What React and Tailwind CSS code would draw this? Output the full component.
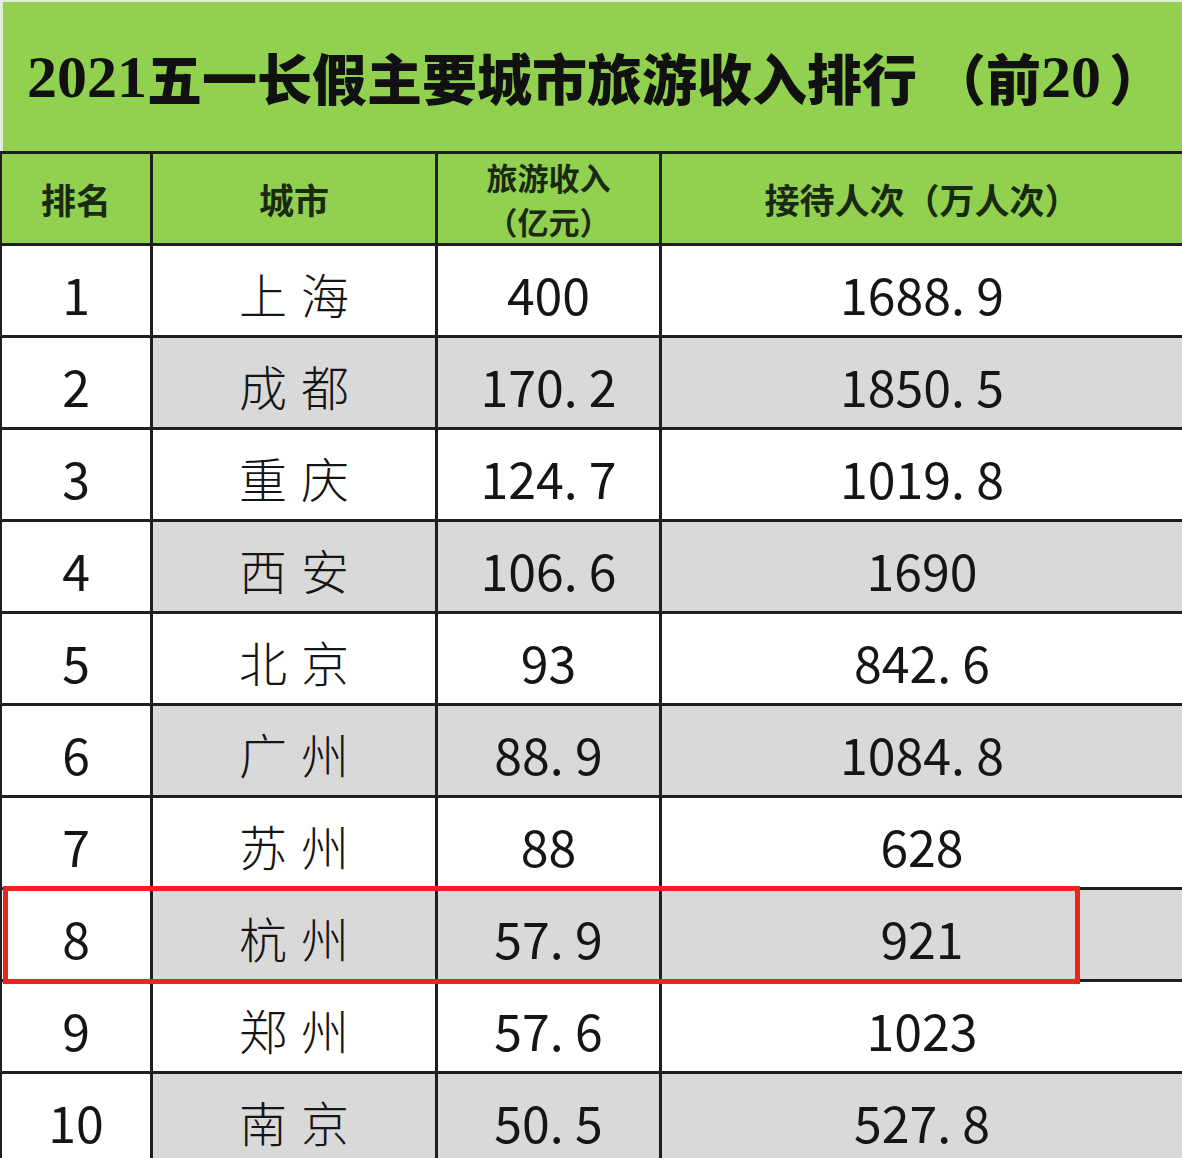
const rows = [
  [1, '上海', '400', '1688. 9'],
  [2, '成都', '170. 2', '1850. 5'],
  [3, '重庆', '124. 7', '1019. 8'],
  [4, '西安', '106. 6', '1690'],
  [5, '北京', '93', '842. 6'],
  [6, '广州', '88. 9', '1084. 8'],
  [7, '苏州', '88', '628'],
  [8, '杭州', '57. 9', '921'],
  [9, '郑州', '57. 6', '1023'],
  [10, '南京', '50. 5', '527. 8'],
]

const cjk = "font-['Noto_Sans_CJK_SC',sans-serif]"

function Row({ rank, city, income, visits }) {
  const shade = rank % 2 === 0 ? 'bg-[#d9d9d9]' : 'bg-white'
  return (
    <div className={`flex h-[92px] shrink-0 border-t-[3px] border-[#1f1f1f] text-[#151515] ${cjk}`}>
      <div className="flex w-[150px] items-center justify-center border-l-2 border-[#1f1f1f] bg-white pt-[6px] text-[50px]">
        {rank}
      </div>
      <div className={`flex w-[285px] items-center justify-center gap-[14px] border-l-[3px] border-[#1f1f1f] pt-[4px] text-[48px] font-light ${shade}`}>
        {city.split('').map((c, i) => (
          <span key={i}>{c}</span>
        ))}
      </div>
      <div className={`flex w-[224px] items-center justify-center whitespace-pre border-l-[3px] border-[#1f1f1f] pt-[6px] text-[50px] ${shade}`}>
        {income}
      </div>
      <div className={`flex flex-1 items-center justify-center whitespace-pre border-l-[3px] border-[#1f1f1f] pt-[6px] text-[50px] ${shade}`}>
        {visits}
      </div>
    </div>
  )
}

export default function App() {
  return (
    <div className="relative flex h-[1158px] w-[1182px] flex-col overflow-hidden bg-white">
      {/* title */}
      <div className={`flex h-[151px] shrink-0 items-center border-l-[3px] border-t-2 border-[#e4ecdc] bg-[#92d050] pl-[24px] text-[55px] font-black text-[#111] ${cjk}`}>
        <span className="font-['Liberation_Serif',serif] text-[60px] font-bold">2021</span>
        <span>五一长假主要城市旅游收入排行</span>
        <span className="ml-[14px]">（</span>
        <span>前</span>
        <span className="font-['Liberation_Serif',serif] text-[60px] font-bold">20</span>
        <span className="ml-[8px]">）</span>
      </div>

      {/* header */}
      <div className={`flex h-[92px] shrink-0 border-t-[3px] border-[#1f1f1f] bg-[#92d050] text-[35px] font-bold leading-[40px] text-[#1a2a12] ${cjk}`}>
        <div className="flex w-[150px] items-center justify-center border-l-2 border-[#1f1f1f]">排名</div>
        <div className="flex w-[285px] items-center justify-center border-l-[3px] border-[#1f1f1f]">城市</div>
        <div className="flex w-[224px] flex-col items-center justify-center border-l-[3px] border-[#1f1f1f] text-[31px] leading-[44px]">
          <span>旅游收入</span>
          <span>（亿元）</span>
        </div>
        <div className="flex flex-1 items-center justify-center border-l-[3px] border-[#1f1f1f]">接待人次（万人次）</div>
      </div>

      {rows.map(([rank, city, income, visits]) => (
        <Row key={rank} rank={rank} city={city} income={income} visits={visits} />
      ))}

      {/* highlight around 杭州 */}
      <div className="absolute left-[3px] top-[886px] h-[98px] w-[1077px] border-[5px] border-[#ec2420]" />
    </div>
  )
}
